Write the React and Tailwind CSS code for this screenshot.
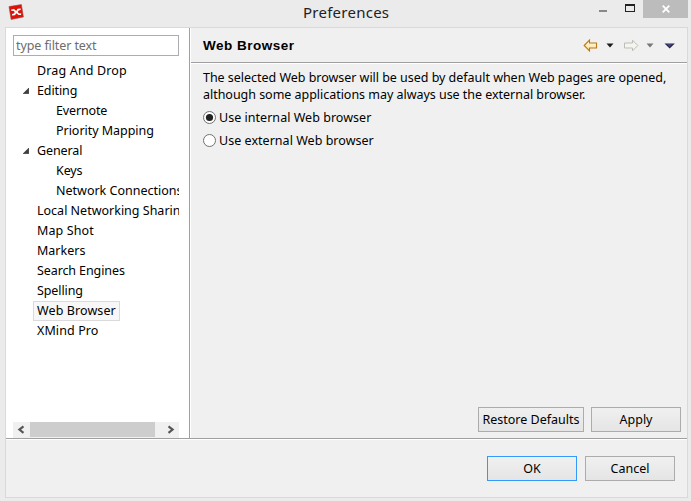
const UI = "font-['Noto_Sans','Open_Sans',sans-serif]";

const tree = [
  { label: 'Drag And Drop', pad: 'pl-[24px]', track: 'tracking-[0.15px]' },
  { label: 'Editing', pad: 'pl-[24px]', open: true, track: 'tracking-[-0.1px]' },
  { label: 'Evernote', pad: 'pl-[43px]', track: 'tracking-[-0.15px]' },
  { label: 'Priority Mapping', pad: 'pl-[43px]', track: 'tracking-[-0.03px]' },
  { label: 'General', pad: 'pl-[24px]', open: true, track: 'tracking-[-0.1px]' },
  { label: 'Keys', pad: 'pl-[43px]', track: 'tracking-[-0.1px]' },
  { label: 'Network Connections', pad: 'pl-[43px]', track: 'tracking-normal' },
  { label: 'Local Networking Sharing', pad: 'pl-[24px]', track: 'tracking-normal' },
  { label: 'Map Shot', pad: 'pl-[24px]', track: 'tracking-[0.1px]' },
  { label: 'Markers', pad: 'pl-[24px]', track: 'tracking-normal' },
  { label: 'Search Engines', pad: 'pl-[24px]', track: 'tracking-[-0.1px]' },
  { label: 'Spelling', pad: 'pl-[24px]', track: 'tracking-[-0.1px]' },
  { label: 'Web Browser', pad: 'pl-[20px]', selected: true, track: 'tracking-[0.1px]' },
  { label: 'XMind Pro', pad: 'pl-[24px]', track: 'tracking-[0.1px]' },
];

function TitleBar() {
  return (
    <header className="flex h-[27px] shrink-0 items-start">
      <svg className="ml-2 mt-[4px] h-4 w-4 shrink-0" viewBox="0 0 16 16">
        <path d="M1 2.6 13.4.6 15.4 13 3.1 15.4Z" fill="#e01208" stroke="#9d4a48" strokeWidth=".6" />
        <path d="M3.2 5.4 6 5.1 8.2 7 9.6 4.8 12.8 4.4 12.6 6 10.6 6.5 9.7 8 11.2 9.4 13.2 9.3 13 10.9 10.5 11 8.3 9.2 7 11.2 3.9 11.5 4.1 9.9 5.9 9.5 6.8 8.1 5.3 6.8 3.4 6.9Z" fill="#fff" />
      </svg>
      <h1 className="flex-1 pl-[279px] text-[15px] leading-[24px] tracking-[0.25px] text-[#222]">Preferences</h1>
      <div className="flex shrink-0">
        <svg className="h-[18px] w-[44px]" viewBox="0 0 44 18" shapeRendering="crispEdges">
          <path d="M0 10h8v2H0Z" fill="#888" />
          <path d="M26 4h10v8H26ZM27 6v5h8V6Z" fill="#222" fillRule="evenodd" />
        </svg>
        <div className="mr-[3px] flex h-[18px] w-[45px] items-center justify-center bg-[#bcbcbc]">
          <svg className="h-[8px] w-[8px]" viewBox="0 0 8 8">
            <path d="M.7.7 7.3 7.3M7.3.7.7 7.3" stroke="#fff" strokeWidth="1.8" />
          </svg>
        </div>
      </div>
    </header>
  );
}

function TreeRow({ item }) {
  return (
    <li className={`flex h-5 items-center whitespace-nowrap ${item.pad} ${item.track}`}>
      {item.open && (
        <svg className="-ml-[14px] mr-[8px] h-[6px] w-[6px] shrink-0" viewBox="0 0 6 6">
          <path d="M5.8 0v5.8H0Z" fill="#404040" stroke="#222" strokeWidth=".5" />
        </svg>
      )}
      <span className={item.selected ? 'flex h-5 w-[87px] items-center border border-[#dadada] bg-[#f7f7f7] pb-px pl-[3px]' : 'pb-[2px]'}>
        {item.label}
      </span>
    </li>
  );
}

function Sidebar() {
  return (
    <aside className="flex w-[185px] shrink-0 flex-col border-r border-white bg-white">
      <div className="flex flex-1 flex-col border-r border-[#a0a0a0] pl-[7px] pr-[10px] pt-[7px]">
        <div className="flex h-[21px] items-center border border-[#abadb3] pl-[2px] tracking-[-0.1px] text-[#6d6d6d]">type filter text</div>
        <ul className="mt-[5px] flex-1 overflow-hidden">
          {tree.map((item) => <TreeRow key={item.label} item={item} />)}
        </ul>
        <div className="flex h-4 bg-[#f0f0f0]">
          <svg className="h-4 w-[17px]" viewBox="0 0 17 16">
            <path d="M10.5 4.4 6.4 7.6l4.1 3.2" fill="none" stroke="#555" strokeWidth="2.1" />
          </svg>
          <div className="h-[15px] w-[125px] bg-[#cdcdcd]" />
          <svg className="ml-[7px] h-4 w-[17px]" viewBox="0 0 17 16">
            <path d="m6.5 4.4 4.1 3.2-4.1 3.2" fill="none" stroke="#555" strokeWidth="2.1" />
          </svg>
        </div>
      </div>
    </aside>
  );
}

function HeaderIcons() {
  return (
    <svg className="h-[16px] w-[96px]" viewBox="0 0 96 16">
      <defs>
        <linearGradient id="gold" x2="0" y2="1">
          <stop offset="0" stopColor="#fffdf0" />
          <stop offset="1" stopColor="#ffe08a" />
        </linearGradient>
      </defs>
      <path d="M1.2 8.5 6.5 3.2V6h7v5h-7v2.8Z" fill="url(#gold)" stroke="#b87916" strokeWidth="1.1" />
      <path d="M23.5 6.5h7L27 10.5Z" fill="#1a1a1a" />
      <path d="M54.8 8.5 49.5 3.2V6h-8v5h8v2.8Z" fill="#f5f5ef" stroke="#bdbdb5" />
      <path d="M63.5 6.5h7L67 10.5Z" fill="#777" />
      <path d="M81.5 6.5h10.3l-5.1 5Z" fill="#26264d" />
      <path d="M84 7h5l-2.5 3Z" fill="#45457c" />
    </svg>
  );
}

function Radio({ checked, track, children }) {
  return (
    <label className="flex h-[23px] items-center">
      <svg className="mr-[3px] h-[13px] w-[13px]" viewBox="0 0 13 13">
        <circle cx="6.5" cy="6.5" r="6" fill="#fff" stroke="#707070" />
        {checked && <circle cx="6.5" cy="6.5" r="3.6" fill="#222" />}
      </svg>
      <span className="tracking-[0.03px]">{children}</span>
    </label>
  );
}

function Button({ children, width = 'w-[90px]', border = 'border-[#acacac]' }) {
  return (
    <button className={`flex h-[25px] items-center justify-center whitespace-nowrap border bg-linear-to-b from-[#f0f0f0] to-[#e5e5e5] ${width} ${border}`}>
      {children}
    </button>
  );
}

export default function App() {
  return (
    <div className={`flex h-[501px] w-[691px] flex-col overflow-hidden bg-[#ebebeb] text-[12.5px] leading-[17px] text-black ${UI}`}>
      <TitleBar />
      <div className="ml-[5px] flex h-[471px] w-[683px] flex-col border border-[#d9d9d9] bg-[#f0f0f0]">
        <div className="flex h-[410px] shrink-0">
          <Sidebar />
          <main className="flex flex-1 flex-col">
            <div className="flex h-[36px] items-center justify-between border-b border-white">
              <div className="flex h-[35px] flex-1 items-center justify-between border-b border-[#a0a0a0] pl-[12px] pr-[8px]">
                <h2 className="font-['Liberation_Sans',Arial,sans-serif] text-[13.5px] font-bold tracking-[0.5px]">Web Browser</h2>
                <HeaderIcons />
              </div>
            </div>
            <div className="pl-[12px] pt-[5px]">
              <p className="whitespace-nowrap tracking-[-0.03px]">
                The selected Web browser will be used by default when Web pages are opened,<br />
                although some applications may always use the external browser.
              </p>
              <div className="mt-[3px]">
                <Radio checked>Use internal Web browser</Radio>
                <Radio>Use external Web browser</Radio>
              </div>
            </div>
            <div className="mt-auto flex justify-end gap-[7px] pb-[6px] pr-[6px]">
              <Button width="w-[106px]">Restore Defaults</Button>
              <Button>Apply</Button>
            </div>
          </main>
        </div>
        <div className="h-px bg-[#a0a0a0]" />
        <div className="h-px bg-white" />
        <footer className="flex justify-end gap-2 pr-[12px] pt-[16px]">
          <Button border="border-[#3399ff]">OK</Button>
          <Button>Cancel</Button>
        </footer>
      </div>
    </div>
  );
}
